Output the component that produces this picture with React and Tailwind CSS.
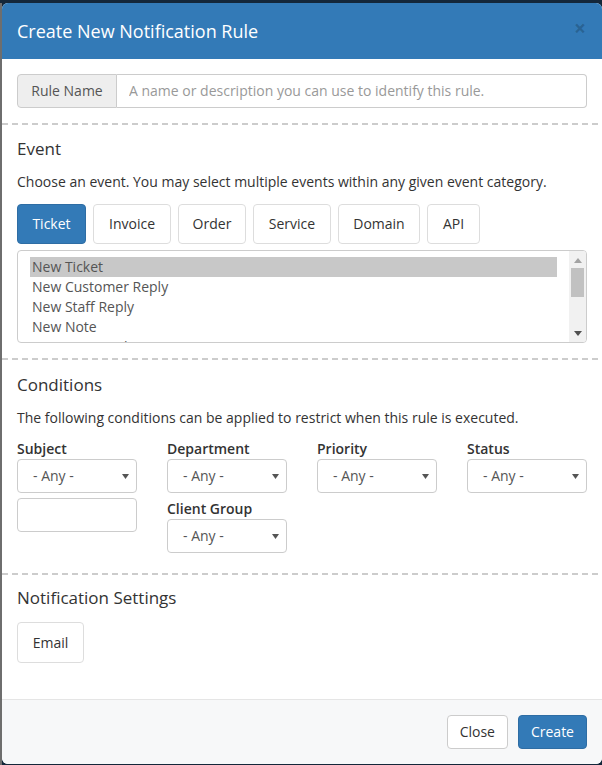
import React, { useState } from 'react';

const EVENT_TABS = [
  { label: 'Ticket', w: 'w-[69px]' },
  { label: 'Invoice', w: 'w-[78px]' },
  { label: 'Order', w: 'w-[68px]' },
  { label: 'Service', w: 'w-[78px]' },
  { label: 'Domain', w: 'w-[82px]' },
  { label: 'API', w: 'w-[53px]' },
];

const TICKET_EVENTS = [
  'New Ticket',
  'New Customer Reply',
  'New Staff Reply',
  'New Note',
  'Department Change',
];

const FakeSelect = ({ value = '- Any -' }) => (
  <div className="h-[34px] w-[120px] border border-[#ccc] rounded-[4px] bg-white flex items-center justify-between pl-[15px] pr-[7px] text-[14px] text-[#555]">
    <span>{value}</span>
    <svg width="7" height="5" viewBox="0 0 7 5" className="mt-[1px]">
      <path d="M0 0 L7 0 L3.5 5 Z" fill="#555" />
    </svg>
  </div>
);

const Divider = () => (
  <div className="h-[2px] w-full bg-[repeating-linear-gradient(90deg,#cccccc_0_6px,transparent_6px_10px)]" />
);

const App = () => {
  const [tab, setTab] = useState('Ticket');
  const [selected, setSelected] = useState('New Ticket');

  return (
    <div
      className="h-[765px] overflow-hidden bg-[#14273a] pt-[3px]"
      style={{ fontFamily: '"Open Sans", "Liberation Sans", sans-serif' }}
    >
      <div className="h-full border-l-2 border-[#6e6e6e]">
        <div className="w-[600px] bg-white rounded-[6px] overflow-hidden text-[#333] text-[14px] leading-[20px]">
          {/* Header */}
          <div className="bg-[#337ab7] h-[56px] px-[15px] flex items-center justify-between">
            <h3 className="text-white text-[18px] leading-[26px]">Create New Notification Rule</h3>
            <span className="text-[21px] font-bold leading-none text-black/20 mr-[1px] -mt-[6px]">×</span>
          </div>

          {/* Rule name */}
          <div className="px-[15px] py-[15px]">
            <div className="flex h-[34px]">
              <span className="w-[100px] flex items-center justify-center bg-[#eee] border border-[#ccc] rounded-l-[4px] text-[#555]">
                Rule Name
              </span>
              <input
                type="text"
                placeholder="A name or description you can use to identify this rule."
                className="flex-1 border border-l-0 border-[#ccc] rounded-r-[4px] px-[12px] text-[14px] text-[#555] placeholder:text-[#999] outline-none"
              />
            </div>
          </div>
          <Divider />

          {/* Event */}
          <div className="px-[15px] pt-[14px] pb-[15px]">
            <h4 className="text-[17px] leading-[20px] mb-[13px]">Event</h4>
            <p className="mb-[12px]">Choose an event. You may select multiple events within any given event category.</p>
            <div className="flex gap-[7px] mb-[6px]">
              {EVENT_TABS.map((t) => (
                <button
                  key={t.label}
                  onClick={() => setTab(t.label)}
                  className={`h-[40px] ${t.w} rounded-[4px] border text-[14px] ${
                    tab === t.label
                      ? 'bg-[#337ab7] border-[#2e6da4] text-white'
                      : 'bg-white border-[#ddd] text-[#333]'
                  }`}
                >
                  {t.label}
                </button>
              ))}
            </div>
            <div className="h-[93px] border border-[#ccc] rounded-[4px] flex overflow-hidden">
              <div className="flex-1 pl-[12px] pr-[12px] pt-[6px] overflow-hidden text-[#555]">
                {TICKET_EVENTS.map((ev) => (
                  <div
                    key={ev}
                    onClick={() => setSelected(ev)}
                    className={`h-[20px] pl-[2px] leading-[20px] whitespace-nowrap ${selected === ev ? 'bg-[#c8c8c8]' : ''}`}
                  >
                    {ev}
                  </div>
                ))}
              </div>
              <div className="w-[17px] bg-[#f1f1f1] flex flex-col items-center">
                <svg width="8" height="5" viewBox="0 0 8 5" className="mt-[7px]">
                  <path d="M0 5 L8 5 L4 0 Z" fill="#a3a3a3" />
                </svg>
                <div className="w-[13px] h-[29px] bg-[#c1c1c1] mt-[5px]" />
                <div className="flex-1" />
                <svg width="8" height="5" viewBox="0 0 8 5" className="mb-[6px]">
                  <path d="M0 0 L8 0 L4 5 Z" fill="#505050" />
                </svg>
              </div>
            </div>
          </div>
          <Divider />

          {/* Conditions */}
          <div className="px-[15px] pt-[15px] pb-[20px]">
            <h4 className="text-[17px] leading-[20px] mb-[13px]">Conditions</h4>
            <p className="mb-[10px]">The following conditions can be applied to restrict when this rule is executed.</p>
            <div className="grid grid-cols-4 gap-x-[30px]">
              <div className="flex flex-col">
                <label className="font-semibold leading-[21px]">Subject</label>
                <FakeSelect />
                <input
                  type="text"
                  className="mt-[5px] h-[34px] w-[120px] border border-[#ccc] rounded-[4px] px-[12px] outline-none"
                />
              </div>
              <div className="flex flex-col">
                <label className="font-semibold leading-[21px]">Department</label>
                <FakeSelect />
                <label className="font-semibold leading-[21px] mt-[5px]">Client Group</label>
                <FakeSelect />
              </div>
              <div className="flex flex-col">
                <label className="font-semibold leading-[21px]">Priority</label>
                <FakeSelect />
              </div>
              <div className="flex flex-col">
                <label className="font-semibold leading-[21px]">Status</label>
                <FakeSelect />
              </div>
            </div>
          </div>
          <Divider />

          {/* Notification settings */}
          <div className="px-[15px] pt-[13px] pb-[36px]">
            <h4 className="text-[17px] leading-[20px] mb-[14px]">Notification Settings</h4>
            <button className="h-[41px] w-[67px] rounded-[4px] border border-[#ddd] bg-white text-[#333] text-[14px]">
              Email
            </button>
          </div>

          {/* Footer */}
          <div className="bg-[#f7f8f9] border-t border-[#e5e5e5] px-[15px] py-[15px] flex justify-end gap-[10px]">
            <button className="h-[34px] px-[12px] rounded-[4px] border border-[#ccc] bg-white text-[#333] text-[14px]">
              Close
            </button>
            <button className="h-[34px] px-[12px] rounded-[4px] border border-[#2e6da4] bg-[#337ab7] text-white text-[14px]">
              Create
            </button>
          </div>
        </div>
      </div>
    </div>
  );
};

export default App;
